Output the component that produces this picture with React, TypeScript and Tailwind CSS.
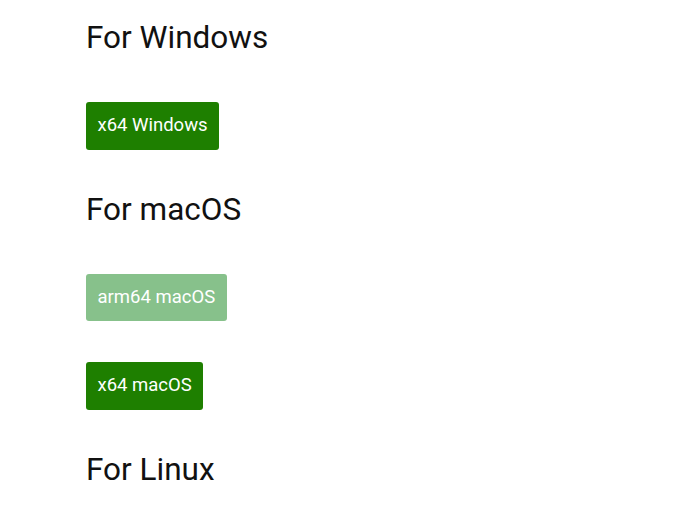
export default function App() {
  const font = { fontFamily: 'Roboto, "Liberation Sans", sans-serif' };
  return (
    <div className="min-h-screen bg-white text-[#111]" style={font}>
      <div className="pl-[86px] pt-[21px] flex flex-col items-start">
        <h2 className="text-[31.5px] leading-[34px] font-normal">For Windows</h2>
        <button className="mt-[47px] h-[48px] px-[11.5px] rounded-[3px] bg-[#1e7f00] text-white text-[18.5px]">
          x64 Windows
        </button>
        <h2 className="mt-[43px] text-[31.5px] leading-[34px] font-normal">For macOS</h2>
        <button className="mt-[47px] h-[47px] px-[11.5px] rounded-[3px] bg-[#87c18b] text-white text-[18.5px]">
          arm64 macOS
        </button>
        <button className="mt-[41px] h-[48px] px-[11.5px] rounded-[3px] bg-[#1e7f00] text-white text-[18.5px]">
          x64 macOS
        </button>
        <h2 className="mt-[43px] text-[31.5px] leading-[34px] font-normal">For Linux</h2>
      </div>
    </div>
  );
}
